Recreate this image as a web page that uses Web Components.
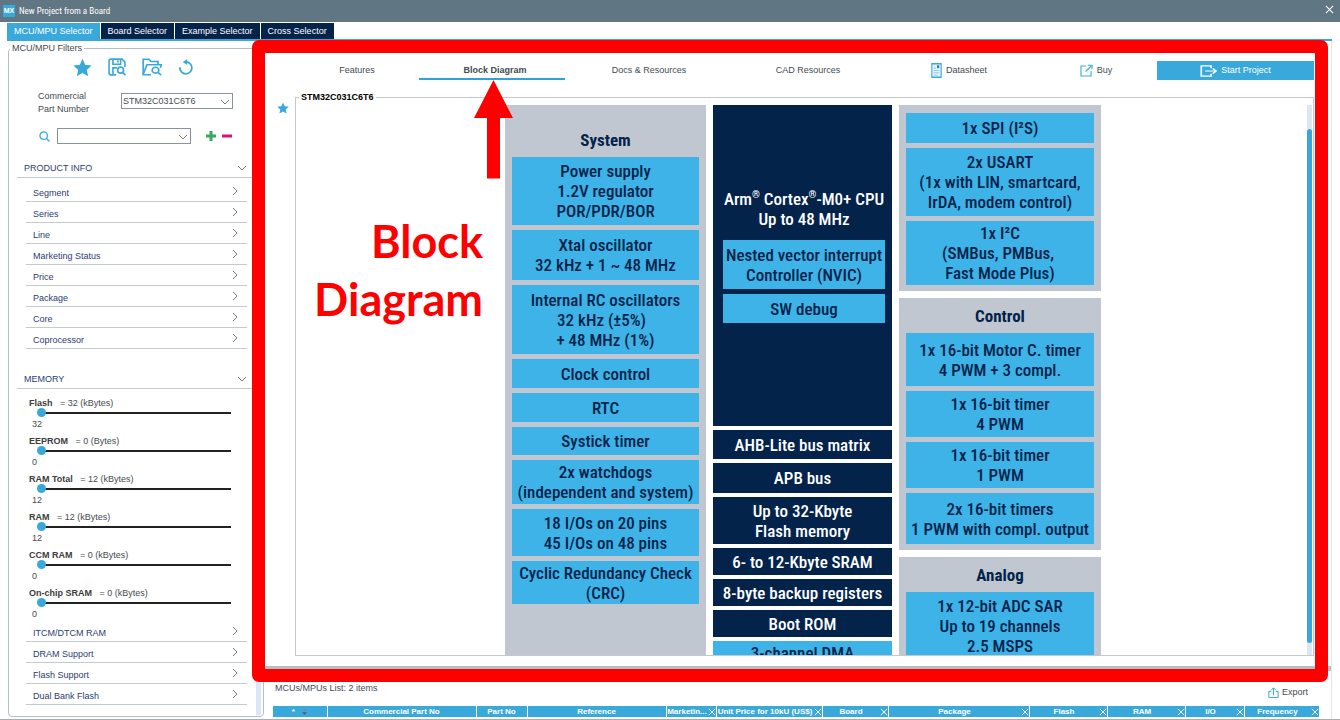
<!DOCTYPE html>
<html lang="en">
<head>
<meta charset="utf-8">
<title>New Project from a Board</title>
<style>
html, body { margin: 0; height: 100%; }
body {
  --sky: #39a9dc; --navy: #03234b; --ink: #444b51; --line: #c3cbd0; --label: #2c3c74;
  --ui: "Liberation Sans", Arial, sans-serif;
  font: 9px/13px var(--ui); color: var(--ink); background: #fff;
}
</style>
</head>
<body>
<mx-app></mx-app>

<script>
const define = (name, css, html, setup) => customElements.define(name, class extends HTMLElement {
  constructor() {
    super();
    const root = this.attachShadow({ mode: "open" });
    const t = document.createElement("template");
    t.innerHTML = `<style>*{box-sizing:border-box}button,input,select{font:inherit;color:inherit;margin:0}button{border:0;background:none;padding:0;cursor:pointer}${css}</style>${html}`;
    root.append(t.content.cloneNode(true));
  }
  connectedCallback() { if (setup) setup(this, this.shadowRoot); }
});

/* ---- icons ---- */
const ICONS = {
  star: `<path d="M10 .8 12.8 7.2 19.6 7.9 14.5 12.5 16 19.2 10 15.7 4 19.2 5.5 12.5 .4 7.9 7.2 7.2Z" fill="#39a9dc"/>`,
  save: `<g fill="none" stroke="#39a9dc" stroke-width="1.8"><path d="M9 18.800H3.200Q1.200 18.800 1.200 16.800V3.200Q1.200 1.200 3.200 1.200H15.500L18.800 4.500V10"/><path d="M5.500 1.500V7H14V1.500M11 2.500V5M5.500 18V11H10"/><circle cx="14" cy="13.500" r="3.300"/><path d="M16.400 16 19.500 19.200"/></g>`,
  folder: `<g fill="none" stroke="#39a9dc" stroke-width="1.700"><path d="M9 18.500H1.200V1.500H7L9 4H16V7.500"/><path d="M1.200 18 5 7.500H19.300L18.300 11"/><circle cx="13.500" cy="13.500" r="3.300"/><path d="M16 16 19.200 19.200"/></g>`,
  reset: `<g fill="none" stroke="#39a9dc" stroke-width="2.200"><path d="M10 3.500A7.500 7.500 0 1 1 2.800 8.500" transform="rotate(-14 10 11)"/></g><path d="M11.500 0V7.500L6 3.800Z" fill="#39a9dc"/>`,
  search: `<g fill="none" stroke="#39a9dc" stroke-width="2.400"><circle cx="8.500" cy="8.500" r="6.800"/><path d="M13.300 13.300 19 19"/></g>`,
  plus: `<path d="M7 0h6v7h7v6h-7v7H7v-7H0V7h7z" fill="#36a860"/>`,
  minus: `<path d="M0 7h20v6H0z" fill="#d4147e"/>`,
  down: `<path d="M2 6 10 14 18 6" fill="none" stroke="#777" stroke-width="2"/>`,
  right: `<path d="M6 2 14 10 6 18" fill="none" stroke="#777" stroke-width="2"/>`,
  close: `<path d="M2 2 18 18M18 2 2 18" fill="none" stroke="#fff" stroke-width="2.400"/>`,
  doc: `<rect x="1.500" y="1" width="17" height="18" fill="#e4f3fb" stroke="#39a9dc" stroke-width="2"/><path d="M5 7H9M5 10H15M5 13H15M5 16H12" stroke="#7fc6e8" stroke-width="1.300"/><rect x="11" y="3" width="4" height="4" fill="#1d87c4"/>`,
  buy: `<path d="M9 3H1.500V18.500H17V11M8.500 11.500 17 3.500M12 2H18.500V8" fill="none" stroke="#39a9dc" stroke-width="1.700"/>`,
  start: `<path d="M13 5.500V1.500H1.500V18.500H13V14.500M6 10H19M15 5.500 19 10 15 14.500" fill="none" stroke="#fff" stroke-width="1.900"/>`,
  export: `<path d="M6 8H1.500V19H18.500V8H14M10 15V2M5.500 6 10 1.500 14.500 6" fill="none" stroke="#39a9dc" stroke-width="1.800"/>`,
  sort: `<path d="M5 8 10 3 15 8Z" fill="#6f8793"/><path d="M3 12H17L10 19Z" fill="#5b5560"/>`
};
define("mx-icon", `:host{display:inline-block;flex:none;width:var(--w,10px);height:var(--h,var(--w,10px))}svg{display:block;width:100%;height:100%}`,
  `<svg viewBox="0 0 20 20" aria-hidden="true" preserveAspectRatio="none"></svg>`,
  (el, r) => { r.querySelector("svg").innerHTML = ICONS[el.getAttribute("name")] || ""; });

/* ---- window chrome ---- */
define("mx-titlebar", `
:host{display:flex;align-items:center;height:22px;padding:0 6px 0 3px;gap:4px;background:#617683;color:#fff;font:9px/14px "Roboto Condensed",Roboto,sans-serif;flex:none}
.logo{width:12px;height:12px;background:var(--sky);font:bold 7px/12px "Liberation Sans",sans-serif;text-align:center}
h1{flex:1;margin:0;font:inherit}`,
`<span class="logo">MX</span><h1><slot></slot></h1><button aria-label="Close"><mx-icon name="close" style="--w:9px"></mx-icon></button>`);

define("mx-tabs", `
:host{display:flex;gap:1px;margin:1px 8px 0 7px;border-bottom:2px solid var(--sky);flex:none}
button{height:16px;padding:0 7px;background:var(--navy);color:#fff;line-height:16px}
button[aria-selected=true]{background:var(--sky)}`,
`<button role="tab" aria-selected="true">MCU/MPU Selector</button><button role="tab" aria-selected="false">Board Selector</button><button role="tab" aria-selected="false">Example Selector</button><button role="tab" aria-selected="false">Cross Selector</button>`);

/* ---- filter panel ---- */
define("mx-section", `
:host{display:block;margin-left:8px}
button{display:flex;justify-content:space-between;align-items:center;width:100%;height:19px;padding:0 16px 0 7px;color:var(--label);border-bottom:1px solid var(--line)}
.body{padding-top:var(--body-gap,3px)}`,
`<button aria-expanded="true"><slot name="title"></slot><mx-icon name="down"></mx-icon></button><div class="body"><slot></slot></div>`);

define("mx-row", `
:host{display:block;margin:0 16px 0 17px}
button{display:flex;justify-content:space-between;align-items:center;width:100%;height:21px;padding:0 7px;color:var(--label);border-bottom:1px solid var(--line)}
span{padding-top:4px}`,
`<button aria-expanded="false"><span><slot></slot></span><mx-icon name="right"></mx-icon></button>`);

define("mx-slider", `
:host{display:block;height:38px;padding-left:12px}
label{display:block;line-height:13px;height:11px;white-space:pre}
b{color:#3c3c3c}
input{display:block;appearance:none;width:194px;height:9px;margin-left:8px;background:linear-gradient(#222,#222) 5px 4px/100% 2px no-repeat}
input::-webkit-slider-thumb{appearance:none;width:9px;height:9px;border-radius:50%;background:var(--sky)}
output{display:block;line-height:13px;padding:1px 0 0 3px}`,
`<label for="r"><b></b>   <span></span></label><input id="r" type="range" min="0" max="100" value="0"><output for="r"></output>`,
(el, r) => {
  r.querySelector("b").textContent = el.getAttribute("label");
  r.querySelector("span").textContent = `= ${el.getAttribute("value")} (${el.getAttribute("unit")})`;
  r.querySelector("output").textContent = el.getAttribute("value");
});

const rows = a => a.map(t => `<mx-row>${t}</mx-row>`).join("");
define("mx-filters", `
:host{display:flex;flex:none;width:256px;margin-left:8px;position:relative}
fieldset{flex:1;min-width:0;margin:0 0 2px;padding:0;border:1px solid #b4bec4;border-radius:4px;min-height:0;overflow:hidden}
legend{padding:0 2px;margin-left:1px;height:14px;line-height:14px}
.tools{display:flex;gap:16px;align-items:center;height:20px;margin:4px 0 0 64px}
.part{display:flex;align-items:center;height:26px;margin:11px 0 0 29px}
.part label{width:83px;white-space:pre-line}
.combo{position:relative;height:16px}
.combo mx-icon{position:absolute;right:3px;top:4px;pointer-events:none}
select,.combo input{display:block;appearance:none;width:100%;height:16px;border:1px solid #8a939a;border-radius:0;background:#fff;padding:0 14px 0 1px;line-height:13px}
.part .combo{margin-top:-4px}
.find{display:flex;align-items:center;height:20px;margin:10px 0 13px 30px}
.find label{width:18px;display:flex}
.find button{display:flex}
.memory{margin-top:21px;--body-gap:8px}
mx-slider:last-child{height:34px}
.bar{position:absolute;right:3px;bottom:4px;top:12px;width:5px;background:#d9e8f4}`,
`<fieldset><legend>MCU/MPU Filters</legend>
<div class="tools">
<button aria-label="Favorites"><mx-icon name="star" style="--w:19px"></mx-icon></button><button aria-label="Save search"><mx-icon name="save" style="--w:18px"></mx-icon></button><button aria-label="Load search"><mx-icon name="folder" style="--w:20px;--h:18px"></mx-icon></button><button aria-label="Reset"><mx-icon name="reset" style="--w:16px"></mx-icon></button></div>
<div class="part"><label for="pn">Commercial
Part Number</label><div class="combo" style="width:112px"><select id="pn"><option>STM32C031C6T6</option></select><mx-icon name="down"></mx-icon></div></div>
<div class="find"><label for="q" aria-label="Search"><mx-icon name="search" style="--w:11px"></mx-icon></label><div class="combo" style="width:134px"><input id="q" type="text"><mx-icon name="down"></mx-icon></div><button aria-label="Add" style="margin:0 6px 0 15px"><mx-icon name="plus"></mx-icon></button><button aria-label="Remove"><mx-icon name="minus"></mx-icon></button></div>
<mx-section><span slot="title">PRODUCT INFO</span></mx-section>
${rows(["Segment", "Series", "Line", "Marketing Status", "Price", "Package", "Core", "Coprocessor"])}
<mx-section class="memory"><span slot="title">MEMORY</span>
<mx-slider label="Flash" value="32" unit="kBytes"></mx-slider><mx-slider label="EEPROM" value="0" unit="Bytes"></mx-slider><mx-slider label="RAM Total" value="12" unit="kBytes"></mx-slider><mx-slider label="RAM" value="12" unit="kBytes"></mx-slider><mx-slider label="CCM RAM" value="0" unit="kBytes"></mx-slider><mx-slider label="On-chip SRAM" value="0" unit="kBytes"></mx-slider></mx-section>
${rows(["ITCM/DTCM RAM", "DRAM Support", "Flash Support", "Dual Bank Flash"])}
</fieldset><div class="bar"></div>`);

/* ---- block diagram ---- */
define("mx-block", `
:host{display:flex;align-items:center;justify-content:center;flex:none;height:var(--h,29px);background:#3db3e7;color:var(--navy);text-align:center;white-space:nowrap}
:host([dark]){background:var(--navy);color:#fff}`, `<div><slot></slot></div>`);
define("mx-group", `
:host{display:flex;flex-direction:column;flex:none;gap:5px;padding:8px 7px 6px;background:#c0c7d1;color:var(--navy);text-align:center}
:host([dark]){background:var(--navy);color:#fff}`, `<slot></slot>`);
const B = (h, t, d = "") => `<mx-block ${d} style="--h:${h}px">${t}</mx-block>`;
define("mx-diagram", `
:host{display:flex;justify-content:center;align-items:flex-start;gap:7px;height:100%;padding-left:3px;overflow:hidden;font:500 17px/20px "Roboto Condensed",Roboto,"Liberation Sans",sans-serif}
.col{display:flex;flex-direction:column;flex:none}
.sys{width:201px}.cpu{width:179px;gap:4px}.per{width:202px;gap:7px}
p{margin:0;white-space:nowrap}sup{font-size:10px;line-height:0}
h2{margin:0 0 2px;font-size:17px;line-height:20px;font-weight:700}`,
`<mx-group class="col sys" style="padding-top:25px;padding-bottom:60px"><h2>System</h2>
${B(68, "Power supply<br>1.2V regulator<br>POR/PDR/BOR")}${B(50, "Xtal oscillator<br>32 kHz + 1 ~ 48 MHz")}${B(69, "Internal RC oscillators<br>32 kHz (±5%)&nbsp;&nbsp;<br>+ 48 MHz (1%)")}${B(29, "Clock control")}${B(29, "RTC")}${B(28, "Systick timer")}${B(44, "2x watchdogs<br>(independent and system)")}${B(47, "18 I/Os on 20 pins<br>45 I/Os on 48 pins")}${B(43, "Cyclic Redundancy Check<br>(CRC)")}</mx-group>
<div class="col cpu"><mx-group dark style="height:321px;padding:84px 7px 0 10px"><p style="margin-bottom:6px">Arm<sup>®</sup> Cortex<sup>®</sup>-M0+ CPU<br>Up to 48 MHz</p>${B(49, "Nested vector interrupt<br>Controller (NVIC)")}${B(29, "SW debug")}</mx-group>
${B(29, "AHB-Lite bus matrix", "dark")}${B(30, "APB bus", "dark")}${B(47, "Up to 32-Kbyte<br>Flash memory", "dark")}${B(27, "6- to 12-Kbyte SRAM", "dark")}${B(27, "8-byte backup registers", "dark")}${B(27, "Boot ROM", "dark")}${B(24, "3-channel DMA")}</div>
<div class="col per"><mx-group>${B(30, "1x SPI (I²S)")}${B(68, "2x USART<br>(1x with LIN, smartcard,<br>IrDA, modem control)")}${B(64, "1x I²C<br>(SMBus, PMBus,&nbsp;<br>Fast Mode Plus)")}</mx-group>
<mx-group><h2>Control</h2>${B(53, "1x 16-bit Motor C. timer<br>4 PWM + 3 compl.")}${B(46, "1x 16-bit timer<br>4 PWM")}${B(46, "1x 16-bit timer<br>1 PWM")}${B(51, "2x 16-bit timers<br>1 PWM with compl. output")}</mx-group>
<mx-group><h2>Analog</h2>${B(68, "1x 12-bit ADC SAR<br>Up to 19 channels<br>2.5 MSPS")}</mx-group></div>`);

/* ---- device pane ---- */
define("mx-nav", `
:host{display:grid;grid-template-columns:124fr 146fr 168fr 150fr 152fr 122fr 157fr;margin:0 17px 0 31px;height:20px;flex:none}
a,button{display:flex;align-items:center;justify-content:center;gap:4px;height:20px;color:var(--ink);text-decoration:none;white-space:nowrap}
[aria-selected=true]{font-weight:bold;border-bottom:2px solid #2da3d8;padding:2px 0 0 6px}
.go{background:var(--sky);color:#fff;height:19px;margin-top:1px}`,
`<button role="tab">Features</button><button role="tab" aria-selected="true">Block Diagram</button><button role="tab">Docs &amp; Resources</button><button role="tab">CAD Resources</button><a href="#datasheet"><mx-icon name="doc" style="--w:11px;--h:15px"></mx-icon>Datasheet</a><a href="#buy"><mx-icon name="buy" style="--w:13px"></mx-icon>Buy</a><button class="go"><mx-icon name="start" style="--w:17px;--h:12px"></mx-icon>Start Project</button>`);

define("mx-device", `
:host{display:flex;flex:1;min-height:0;margin:10px 17px 10px 13px}
.fav{align-self:flex-start;margin:12px 6px 0 0;display:flex}
fieldset{flex:1;min-width:0;margin:0;padding:1px 1px 0 0;border:1px solid #c6c9cc;display:flex;min-height:0}
legend{height:14px;line-height:14px;padding:0 2px;margin-left:3px;color:#000;font-weight:bold}
mx-diagram{flex:1;min-width:0}
.bar{width:5px;background:#dbe8f3;padding:24px 0 12px}
.bar i{display:block;height:100%;border-radius:3px;background:#3ba5d9}`,
`<button class="fav" aria-label="Favorite"><mx-icon name="star" style="--w:12px"></mx-icon></button><fieldset><legend>STM32C031C6T6</legend><mx-diagram></mx-diagram><div class="bar"><i></i></div></fieldset>`);

/* ---- result list ---- */
const COLS = [["*", 54, "s"], ["Commercial Part No", 149], ["Part No", 51], ["Reference", 139], ["Marketin...", 50, "x"], ["Unit Price for 10kU (US$)", 106, "x"], ["Board", 66, "x"], ["Package", 141, "x"], ["Flash", 78, "x"], ["RAM", 78, "x"], ["I/O", 59, "x"], ["Frequency", 75, "x"]];
define("mx-list", `
:host{display:block;flex:none;margin:0 14px 0 9px;height:48px}
.head{display:flex;justify-content:space-between;height:35px;padding:11px 9px 0 2px}
.head button{display:flex;align-items:center;gap:3px;height:13px;margin-top:4px}
table{width:100%;table-layout:fixed;border-collapse:collapse;color:#fff;font:bold 8px/11px "Liberation Sans",sans-serif}
th{padding:0;height:11px;background:var(--sky);border-right:1px solid #fff}
div.c{display:flex;align-items:center;justify-content:center;height:11px;white-space:nowrap}
.c span{flex:1;text-align:center}.c.s span{flex:none;padding-right:6px}`,
`<div class="head"><span>MCUs/MPUs List: 2 items</span><button><mx-icon name="export" style="--w:11px"></mx-icon>Export</button></div>
<table><colgroup>${COLS.map(c => `<col style="width:${c[1]}px">`).join("")}</colgroup><thead><tr>${COLS.map(c => `<th scope="col"><div class="c ${c[2] || ""}"><span>${c[0]}</span>${c[2] == "x" ? `<mx-icon name="close" style="--w:8px"></mx-icon>` : c[2] ? `<mx-icon name="sort" style="--w:7px"></mx-icon>` : ""}</div></th>`).join("")}</tr></thead></table>`);

/* ---- tutorial callout drawn over the pane ---- */
define("mx-callout", `
:host{position:absolute;inset:-1px 3px 37px -12px;border:13px solid #f00;border-radius:7px;pointer-events:none}
svg{position:absolute;left:209px;top:27px;width:39px;height:99px}
p{position:absolute;right:calc(100% - 218px);top:159px;margin:0;color:#f00;text-align:right;font:bold 45px/58px Lato,sans-serif}`,
`<svg viewBox="0 0 39 99" aria-hidden="true"><path d="M19.500 0 39 38H26V98.500H13V38H0Z" fill="#f00"/></svg><p><slot></slot></p>`);

define("mx-main", `
:host{display:flex;flex-direction:column;flex:1;min-width:0;position:relative;border-right:1px solid #e2e5e8;margin-right:8px}
mx-nav{margin-top:19px}
.split{height:5px;flex:none;background:#b4bec6}`,
`<mx-nav></mx-nav><mx-device></mx-device><div class="split"></div><mx-list></mx-list><mx-callout>Block<br>Diagram</mx-callout>`);

define("mx-app", `
:host{display:flex;flex-direction:column;height:100vh;overflow:hidden;border-bottom:1px solid #a8adb1;box-sizing:border-box}
.work{display:flex;flex:1;min-height:0}`,
`<mx-titlebar>New Project from a Board</mx-titlebar><mx-tabs></mx-tabs><div class="work"><mx-filters></mx-filters><mx-main></mx-main></div>`);
</script>
</body>
</html>
